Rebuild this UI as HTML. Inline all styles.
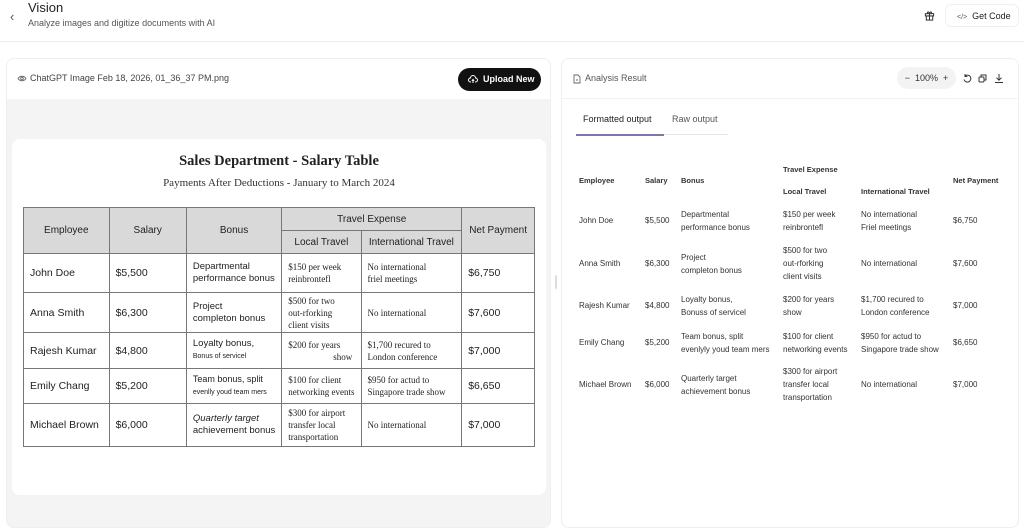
<!DOCTYPE html>
<html><head><meta charset="utf-8"><style>
*{box-sizing:border-box;margin:0;padding:0}
body{width:1024px;height:520px;overflow:hidden;background:#fff;font-family:"Liberation Sans",sans-serif;color:#222;position:relative}
.abs{position:absolute}
.hdr{position:absolute;left:0;top:0;width:1024px;height:42px;border-bottom:1px solid #ececec;background:#fff}
.panel{position:absolute;border:1px solid #efefef;border-radius:8px;background:#fff}
.serif{font-family:"Liberation Serif",serif}
table.img{position:absolute;left:23px;top:207px;width:512px;border-collapse:collapse;font-family:"Liberation Sans",sans-serif;font-size:10.5px;color:#222;white-space:nowrap}
table.img td,table.img th{border:1px solid #777;padding:0 6px;vertical-align:middle;text-align:left;overflow:hidden}
table.img th{background:#d9d9d9;font-weight:normal;text-align:center;font-size:10px}
.sm{font-family:"Liberation Serif",serif;font-size:9px;line-height:12px}
.bn{font-size:9.5px;line-height:12px}
.rt{position:absolute;font-size:8px;color:#333;line-height:13px;white-space:nowrap}
.rh{font-weight:bold;font-size:7.5px;color:#333}
</style></head><body>
<div class="hdr">
 <div class="abs" style="left:10px;top:9px;font-size:13px;color:#555">&#8249;</div>
 <div class="abs" style="left:28px;top:0px;font-size:13px;color:#222">Vision</div>
 <div class="abs" style="left:28px;top:18px;font-size:9px;color:#555">Analyze images and digitize documents with AI</div>
 <svg class="abs" style="left:924px;top:10px" width="11" height="11" viewBox="0 0 12 12" fill="none" stroke="#333" stroke-width="1.1"><rect x="1.5" y="4" width="9" height="2.5"/><rect x="2.5" y="6.5" width="7" height="4.5"/><path d="M6 4v7M6 4C5 1 3 2 4 4M6 4c1-3 3-2 2 0"/></svg>
 <div class="abs" style="left:945px;top:4px;width:74px;height:23px;border:1px solid #f0f0f0;border-radius:6px;font-size:9px;line-height:22px;padding-left:11px;color:#222"><span style="font-size:7px;color:#555">&lt;/&gt;</span>&nbsp; Get Code</div>
</div>

<div class="panel" style="left:6px;top:58px;width:545px;height:470px;background:#f4f4f4;overflow:hidden">
 <div class="abs" style="left:0;top:0;width:545px;height:40px;background:#fff"></div>
 <svg class="abs" style="left:10px;top:15px" width="10" height="9" viewBox="0 0 10 8" fill="none" stroke="#666" stroke-width="0.9"><path d="M1 4C3 1 7 1 9 4C7 7 3 7 1 4Z"/><circle cx="5" cy="4" r="1.3"/></svg>
 <div class="abs" style="left:23px;top:14px;font-size:9px;color:#444">ChatGPT Image Feb 18, 2026, 01_36_37 PM.png</div>
 <div class="abs" style="left:451px;top:9px;width:83px;height:23px;background:#111;border-radius:12px;color:#fff;font-size:9px;font-weight:bold;line-height:23px;padding-left:25px">Upload New</div>
 <svg class="abs" style="left:461px;top:16px" width="10" height="9" viewBox="0 0 10 9" fill="none" stroke="#fff" stroke-width="1"><path d="M3 7H2.5A2 2 0 0 1 2.5 3A2.5 2.5 0 0 1 7.5 3A2 2 0 0 1 7.5 7H7M5 8V4.5M3.8 5.7L5 4.5 6.2 5.7"/></svg>
</div>
<div class="abs" style="left:12px;top:139px;width:534px;height:356px;background:#fff;border-radius:8px"></div>
<div class="abs serif" style="left:12px;top:153px;width:534px;text-align:center;font-size:14.5px;font-weight:bold;color:#222">Sales Department - Salary Table</div>
<div class="abs serif" style="left:12px;top:177px;width:534px;text-align:center;font-size:11px;color:#333">Payments After Deductions - January to March 2024</div>
<table class="img">
<colgroup><col style="width:86px"><col style="width:81px"><col style="width:92px"><col style="width:79px"><col style="width:101px"><col style="width:73px"></colgroup>
<tr style="height:23px"><th rowspan="2">Employee</th><th rowspan="2">Salary</th><th rowspan="2">Bonus</th><th colspan="2">Travel Expense</th><th rowspan="2">Net Payment</th></tr>
<tr style="height:23px"><th>Local Travel</th><th>International Travel</th></tr>
<tr style="height:39px"><td>John Doe</td><td>$5,500</td><td class="bn">Departmental<br>performance bonus</td><td class="sm">$150 per week<br>reinbrontefl</td><td class="sm">No international<br>friel meetings</td><td>$6,750</td></tr>
<tr style="height:40px"><td>Anna Smith</td><td>$6,300</td><td class="bn">Project<br>completon bonus</td><td class="sm">$500 for two<br>out-rforking<br>client visits</td><td class="sm">No international</td><td>$7,600</td></tr>
<tr style="height:36px"><td>Rajesh Kumar</td><td>$4,800</td><td class="bn">Loyalty bonus,<br><span style="font-size:7px">Bonus of servicel</span></td><td class="sm">$200 for years<br><span style="padding-left:45px">show</span></td><td class="sm">$1,700 recured to<br>London conference</td><td>$7,000</td></tr>
<tr style="height:35px"><td>Emily Chang</td><td>$5,200</td><td class="bn" style="font-size:9px">Team bonus, split<br><span style="font-size:7px">evenlly youd team mers</span></td><td class="sm">$100 for client<br>networking events</td><td class="sm">$950 for actud to<br>Singapore trade show</td><td>$6,650</td></tr>
<tr style="height:43px"><td>Michael Brown</td><td>$6,000</td><td class="bn"><i>Quarterly target</i><br>achievement bonus</td><td class="sm">$300 for airport<br>transfer local<br>transportation</td><td class="sm">No international</td><td>$7,000</td></tr>
</table>
<div class="abs" style="left:555px;top:275px;width:2px;height:14px;background:#ddd;border-radius:1px"></div>

<div class="panel" style="left:561px;top:58px;width:458px;height:470px">
 <div class="abs" style="left:0;top:39px;width:456px;height:1px;background:#f2f2f2"></div>
 <svg class="abs" style="left:11px;top:15px" width="8" height="10" viewBox="0 0 8 10" fill="none" stroke="#666" stroke-width="0.9"><path d="M1 1h4l2 2v6H1Z M3 6h2"/></svg>
 <div class="abs" style="left:23px;top:14px;font-size:9px;color:#555">Analysis Result</div>
 <div class="abs" style="left:335px;top:8px;width:59px;height:22px;background:#f3f3f3;border-radius:11px;font-size:9px;line-height:22px;color:#333;text-align:center">&minus;&nbsp; 100% &nbsp;+</div>
 <svg class="abs" style="left:400px;top:14px;" width="50" height="11" viewBox="0 0 50 11" fill="none" stroke="#333" stroke-width="1"><path d="M3 3A3.5 3.5 0 1 1 2 6.5M3 1v2.5h2.3"/><rect x="17" y="4" width="5" height="5" rx="1"/><path d="M19 4V2h5v5h-2"/><path d="M37 1v6M34.5 4.7L37 7.2 39.5 4.7M33 9.5h8"/></svg>
 <div class="abs" style="left:21px;top:55px;font-size:9px;color:#222">Formatted output</div>
 <div class="abs" style="left:110px;top:55px;font-size:9px;color:#555">Raw output</div>
 <div class="abs" style="left:14px;top:75px;width:88px;height:2px;background:#7b78b0"></div>
 <div class="abs" style="left:102px;top:75px;width:64px;height:1px;background:#e5e5e5"></div>
</div>
<div class="rt rh" style="left:783px;top:163px">Travel Expense</div>
<div class="rt rh" style="left:579px;top:174px">Employee</div>
<div class="rt rh" style="left:645px;top:174px">Salary</div>
<div class="rt rh" style="left:681px;top:174px">Bonus</div>
<div class="rt rh" style="left:953px;top:174px">Net Payment</div>
<div class="rt rh" style="left:783px;top:185px">Local Travel</div>
<div class="rt rh" style="left:861px;top:185px">International Travel</div>

<div class="rt" style="left:579px;top:214px">John Doe</div><div class="rt" style="left:645px;top:214px">$5,500</div>
<div class="rt" style="left:681px;top:208px">Departmental<br>performance bonus</div><div class="rt" style="left:783px;top:208px">$150 per week<br>reinbrontefl</div>
<div class="rt" style="left:861px;top:208px">No international<br>Friel meetings</div><div class="rt" style="left:953px;top:214px">$6,750</div>

<div class="rt" style="left:579px;top:257px">Anna Smith</div><div class="rt" style="left:645px;top:257px">$6,300</div>
<div class="rt" style="left:681px;top:251px">Project<br>completon bonus</div><div class="rt" style="left:783px;top:244px">$500 for two<br>out-rforking<br>client visits</div>
<div class="rt" style="left:861px;top:257px">No international</div><div class="rt" style="left:953px;top:257px">$7,600</div>

<div class="rt" style="left:579px;top:299px">Rajesh Kumar</div><div class="rt" style="left:645px;top:299px">$4,800</div>
<div class="rt" style="left:681px;top:293px">Loyalty bonus,<br>Bonuss of servicel</div><div class="rt" style="left:783px;top:293px">$200 for years<br>show</div>
<div class="rt" style="left:861px;top:293px">$1,700 recured to<br>London conference</div><div class="rt" style="left:953px;top:299px">$7,000</div>

<div class="rt" style="left:579px;top:336px">Emily Chang</div><div class="rt" style="left:645px;top:336px">$5,200</div>
<div class="rt" style="left:681px;top:330px">Team bonus, split<br>evenlyly youd team mers</div><div class="rt" style="left:783px;top:330px">$100 for client<br>networking events</div>
<div class="rt" style="left:861px;top:330px">$950 for actud to<br>Singapore trade show</div><div class="rt" style="left:953px;top:336px">$6,650</div>

<div class="rt" style="left:579px;top:378px">Michael Brown</div><div class="rt" style="left:645px;top:378px">$6,000</div>
<div class="rt" style="left:681px;top:372px">Quarterly target<br>achievement bonus</div><div class="rt" style="left:783px;top:365px">$300 for airport<br>transfer local<br>transportation</div>
<div class="rt" style="left:861px;top:378px">No international</div><div class="rt" style="left:953px;top:378px">$7,000</div>
</body></html>
